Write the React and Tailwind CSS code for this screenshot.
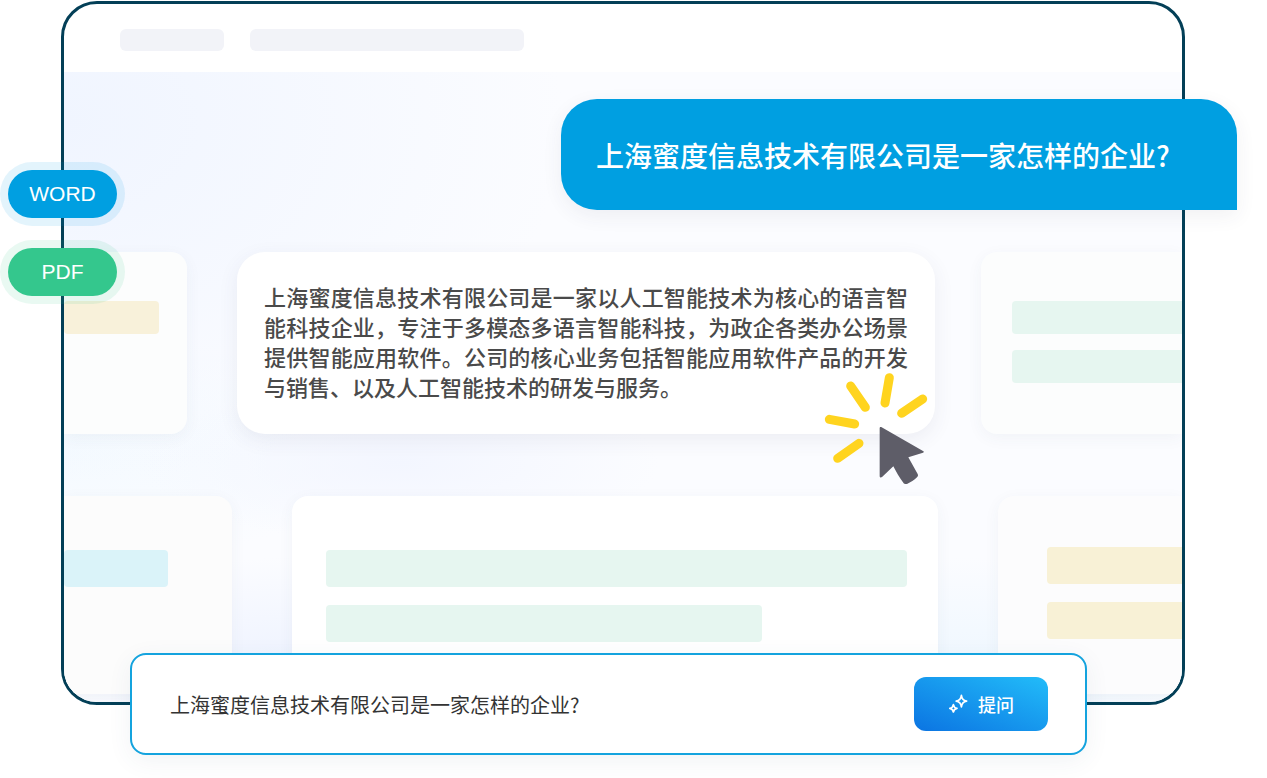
import React from "react";

function FormatPill({ label, className }) {
  return (
    <span
      className={`flex h-12 w-[109px] items-center justify-center rounded-full text-[21px] text-white ${className}`}
    >
      {label}
    </span>
  );
}

function Bar({ className }) {
  return <div className={`rounded-[4px] ${className}`} />;
}

function ClickCursor({ className }) {
  return (
    <svg viewBox="68 37 315 339" aria-hidden="true" className={className}>
      <g stroke="#ffd41f" strokeWidth="27" strokeLinecap="round">
        <path d="M151 79 195 143" />
        <path d="M267 54 254 130" />
        <path d="M367 118 304 161" />
        <path d="M87 179 163 193" />
        <path d="M176 251 112 296" />
      </g>
      <path
        d="M238 206C238 202 241 201 244 203L368 274C372 276 371 278 368 279L324 293 352 343C354 347 353 350 350 353C342 362 331 368 320 373C315 374 312 373 309 369C297 354 288 337 279 320L246 351C242 355 238 354 238 349Z"
        fill="#5e5d68"
      />
    </svg>
  );
}

function SparkleIcon() {
  return (
    <svg
      viewBox="0 0 20 20"
      aria-hidden="true"
      className="size-5"
      fill="none"
      stroke="white"
      strokeWidth="1.7"
      strokeLinejoin="round"
    >
      <path d="M13.4 1.4Q14 6.4 18.6 7.2 14 8 13.4 13 12.8 8 8.2 7.2 12.8 6.4 13.4 1.4Z" />
      <path d="M5.4 10.6Q5.9 13.8 9 14.3 5.9 14.8 5.4 18 4.9 14.8 1.8 14.3 4.9 13.8 5.4 10.6Z" />
    </svg>
  );
}

const cardShadow = "shadow-[0_4px_16px_rgba(60,70,100,0.05)]";

export default function App() {
  return (
    <main
      lang="zh-CN"
      className="relative pt-px pb-6 font-['Liberation_Sans','Noto_Sans_CJK_SC',sans-serif]"
    >
      <section className="ml-[61px] mr-[82px] overflow-hidden rounded-[36px] border-3 border-[#033f57] bg-white">
        <header className="flex h-[68px] items-center gap-[26px] px-14 pt-1">
          <div className="h-[22px] w-[104px] rounded-md bg-[#f2f3f8]" />
          <div className="h-[22px] w-[274px] rounded-md bg-[#f2f3f8]" />
        </header>

        <div className="bg-[#fbfcff] bg-[radial-gradient(ellipse_500px_360px_at_0%_8%,#f0f5ff,#f0f5ff00),radial-gradient(ellipse_230px_120px_at_20%_96%,#edf2ff,#edf2ff00),radial-gradient(ellipse_260px_80px_at_30%_62%,#f3f6ff,#f3f6ff00),radial-gradient(ellipse_300px_120px_at_80%_96%,#eef7ff,#eef7ff00),radial-gradient(ellipse_300px_120px_at_0%_60%,#f4faff,#f4faff00)] pb-2 pt-[180px]">
          <div className="flex h-[182px]">
            <div className={`w-[123px] rounded-r-2xl bg-[#fcfdfd] pt-[49px] ${cardShadow}`}>
              <Bar className="mr-7 h-[33px] bg-[#f8f1da]" />
            </div>

            <article className="relative ml-[50px] mr-[46px] min-w-0 flex-1 rounded-[28px] bg-white px-[27px] pt-[29px] shadow-[0_6px_20px_rgba(60,70,100,0.08)]">
              <p className="text-justify font-['Noto_Sans_CJK_SC',sans-serif] text-[22px] font-medium leading-[30px] text-[#4a4a4a]">
                上海蜜度信息技术有限公司是一家以人工智能技术为核心的语言智能科技企业，专注于多模态多语言智能科技，为政企各类办公场景提供智能应用软件。公司的核心业务包括智能应用软件产品的开发与销售、以及人工智能技术的研发与服务。
              </p>
              <ClickCursor className="absolute -bottom-[51px] right-[7px] w-[105px]" />
            </article>

            <div className={`flex w-[201px] flex-col gap-4 rounded-l-2xl bg-[#fcfdfd] pl-[31px] pt-[49px] ${cardShadow}`}>
              <Bar className="h-[33px] rounded-r-none bg-[#e6f6f0]" />
              <Bar className="h-[33px] rounded-r-none bg-[#e6f6f0]" />
            </div>
          </div>

          <div className="mt-[62px] flex h-[198px]">
            <div className={`w-[168px] rounded-tr-2xl bg-[#fcfcfc] pt-[54px] ${cardShadow}`}>
              <Bar className="mr-16 h-[37px] bg-[#daf3f9]" />
            </div>

            <div className={`mx-[60px] flex min-w-0 flex-1 flex-col gap-[18px] rounded-t-2xl bg-white pl-[34px] pr-[31px] pt-[54px] ${cardShadow}`}>
              <Bar className="h-[37px] bg-[#e6f6f0]" />
              <Bar className="h-[37px] w-3/4 bg-[#e6f6f0]" />
            </div>

            <div className={`flex w-[184px] flex-col gap-[18px] rounded-tl-2xl bg-[#fcfcfd] pl-[49px] pt-[51px] ${cardShadow}`}>
              <Bar className="h-[37px] rounded-r-none bg-[#f8f1d6]" />
              <Bar className="h-[37px] rounded-r-none bg-[#f8f1d6]" />
            </div>
          </div>
        </div>
      </section>

      <div className="absolute left-2 top-[170px] flex flex-col gap-[30px]">
        <FormatPill label="WORD" className="bg-[#009fe1] shadow-[0_0_0_8px_rgba(0,159,225,0.11)]" />
        <FormatPill label="PDF" className="bg-[#34c78d] shadow-[0_0_0_8px_rgba(52,199,141,0.11)]" />
      </div>

      <div className="absolute right-[30px] top-[99px] flex h-[111px] w-[676px] items-center rounded-[36px] rounded-br-none bg-[#009fe1] px-[35px] font-['Noto_Sans_CJK_SC',sans-serif] text-[28px] font-medium leading-10 text-white shadow-[0_6px_20px_rgba(60,60,80,0.07)]">
        上海蜜度信息技术有限公司是一家怎样的企业?
      </div>

      <form
        onSubmit={(event) => event.preventDefault()}
        className="relative -mt-[52px] ml-[130px] mr-[180px] flex items-center gap-6 rounded-2xl border-2 border-[#14a3de] bg-white py-[22px] pl-[38px] pr-[37px] font-['Noto_Sans_CJK_SC',sans-serif] shadow-[0_6px_24px_rgba(60,80,110,0.07)]"
      >
        <input
          type="text"
          aria-label="问题"
          defaultValue="上海蜜度信息技术有限公司是一家怎样的企业?"
          className="h-10 min-w-0 flex-1 bg-transparent text-[20px] text-[#333333] outline-none"
        />
        <button
          type="submit"
          className="flex h-[54px] w-[134px] items-center justify-center gap-[10px] rounded-xl bg-[linear-gradient(22deg,#0b74e2,#22bcf9)] text-[18px] font-medium text-white"
        >
          <SparkleIcon />
          提问
        </button>
      </form>
    </main>
  );
}
